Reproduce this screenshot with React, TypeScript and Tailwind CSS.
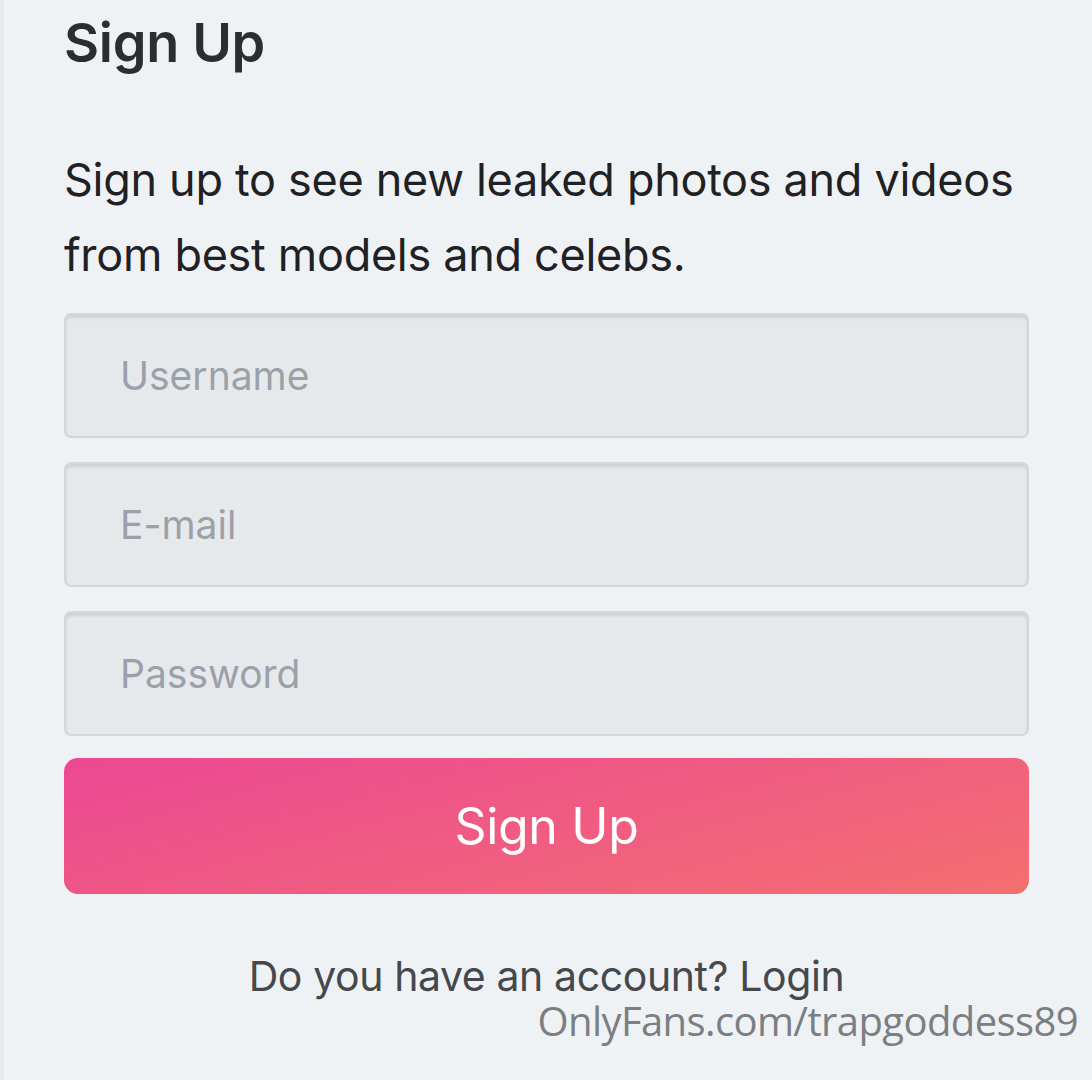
export default function App() {
  const fields = ["Username", "E-mail", "Password"];
  return (
    <div className="min-h-[1080px] w-full bg-[#eff2f4] font-['Inter',sans-serif] text-[#2b2d30] border-l-[4px] border-[#e8ebed]">
      <div className="px-[60px] pt-[11px] pr-[63px]">
        <h1 className="text-[54px] font-semibold leading-[64px] tracking-[-0.3px]">Sign Up</h1>
        <p className="mt-[67px] text-[45px] leading-[75px] text-[#1f2124] tracking-[-0.3px]">
          Sign up to see new leaked photos and videos from best models and celebs.
        </p>
        <div className="mt-[21px] flex flex-col gap-[24px]">
          {fields.map((f) => (
            <input
              key={f}
              placeholder={f}
              type={f === "Password" ? "password" : "text"}
              className="h-[125px] w-full rounded-[7px] border-2 border-[#d3d7da] bg-[#e6e9eb] px-[54px] text-[39px] text-[#333] shadow-[inset_0_3px_3px_rgba(0,0,0,0.1)] outline-none placeholder:text-[#9ba1a9]"
            />
          ))}
        </div>
        <button className="mt-[22px] flex h-[136px] w-full items-center justify-center rounded-[14px] bg-linear-[165deg] from-[#ec4893] to-[#f46f70] text-[50px] text-white tracking-[-0.3px]">
          Sign Up
        </button>
        <div className="mt-[62px] text-center text-[41px] leading-[40px] text-[#45484c] tracking-[-0.4px]">
          Do you have an account? Login
        </div>
      </div>
      <div className="mt-[5px] pr-[14px] text-right font-['Open_Sans',sans-serif] text-[40px] leading-[40px] text-[#7b7e82] tracking-[-0.6px]">
        OnlyFans.com/trapgoddess89
      </div>
    </div>
  );
}
